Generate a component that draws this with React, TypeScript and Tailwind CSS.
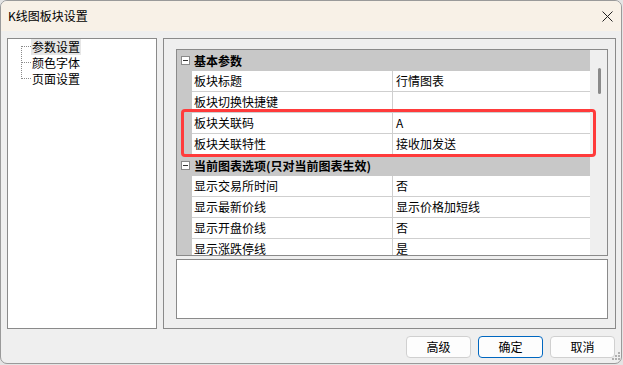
import React from 'react';

const FONT = '"Noto Sans CJK SC", "Microsoft YaHei", sans-serif';

interface PropRow {
  name: string;
  value: string;
}

interface PropGroup {
  title: string;
  rows: PropRow[];
}

const groups: PropGroup[] = [
  {
    title: '基本参数',
    rows: [
      { name: '板块标题', value: '行情图表' },
      { name: '板块切换快捷键', value: '' },
      { name: '板块关联码', value: 'A' },
      { name: '板块关联特性', value: '接收加发送' },
    ],
  },
  {
    title: '当前图表选项(只对当前图表生效)',
    rows: [
      { name: '显示交易所时间', value: '否' },
      { name: '显示最新价线', value: '显示价格加短线' },
      { name: '显示开盘价线', value: '否' },
      { name: '显示涨跌停线', value: '是' },
    ],
  },
];

const treeItems = ['参数设置', '颜色字体', '页面设置'];

const MinusBox = () => (
  <svg width="9" height="9" viewBox="0 0 9 9" shapeRendering="crispEdges">
    <rect x="0.5" y="0.5" width="8" height="8" fill="#fff" stroke="#8a8a8a" />
    <line x1="2" y1="4.5" x2="7" y2="4.5" stroke="#333" />
  </svg>
);

const TreeLines = () => (
  <svg width="10" height="36" viewBox="0 0 10 36" shapeRendering="crispEdges" className="shrink-0">
    <line x1="0.5" y1="1" x2="0.5" y2="35" stroke="#8a8a8a" strokeDasharray="1 1" />
    <line x1="1" y1="1.5" x2="10" y2="1.5" stroke="#8a8a8a" strokeDasharray="1 1" />
    <line x1="1" y1="17.5" x2="10" y2="17.5" stroke="#8a8a8a" strokeDasharray="1 1" />
    <line x1="1" y1="33.5" x2="10" y2="33.5" stroke="#8a8a8a" strokeDasharray="1 1" />
  </svg>
);

const DialogButton: React.FC<{ label: string; primary?: boolean }> = ({ label, primary }) => (
  <button
    className={
      primary
        ? 'w-[65px] h-[22px] rounded-[4px] border border-[#0067c0] bg-[#fdfdfd] text-[12px] text-black leading-none'
        : 'w-[65px] h-[22px] rounded-[4px] border border-[#d0d0d0] bg-[#fdfdfd] text-[12px] text-black leading-none'
    }
  >
    {label}
  </button>
);

export default function App() {
  return (
    <div
      className="relative w-[623px] h-[365px] bg-[#e4e4e4] overflow-hidden text-black"
      style={{ fontFamily: FONT }}
    >
      <div className="flex flex-col w-[622px] h-[364px] border border-[#9a9a9a] rounded-[7px] overflow-hidden bg-[#efefef]">
        {/* Title bar */}
        <div className="h-[30px] shrink-0 bg-[#f8f1e7] flex items-center justify-between pl-[7px] pr-[8px]">
          <span className="text-[12px] leading-none">K线图板块设置</span>
          <svg width="11" height="11" viewBox="0 0 11 11">
            <path d="M0.5 0.5 L10.5 10.5 M10.5 0.5 L0.5 10.5" stroke="#222" strokeWidth="1" />
          </svg>
        </div>

        {/* Body */}
        <div className="flex-1 flex flex-col pt-[7px] pl-[6px] pr-[5px]">
          <div className="flex gap-[6px] h-[291px]">
            {/* Left tree */}
            <div className="w-[150px] h-full border border-[#8a8a8a] bg-white flex pl-[13px] pt-[6px]">
              <TreeLines />
              <div className="flex flex-col -mt-[6px]">
                {treeItems.map((t, i) => (
                  <div
                    key={t}
                    className={
                      i === 0
                        ? 'h-[16px] px-[1px] bg-[#e6e6e6] text-[12px] leading-[16px] w-fit'
                        : 'h-[16px] px-[1px] text-[12px] leading-[16px] w-fit'
                    }
                  >
                    {t}
                  </div>
                ))}
              </div>
            </div>

            {/* Right group */}
            <div className="flex-1 h-full border border-[#8a8a8a] flex flex-col pt-[10px] pl-[12px] pr-[7px] pb-[9px] gap-[3px]">
              <div className="h-[207px] border border-[#8a8a8a] bg-white flex overflow-hidden">
                <div className="flex-1 flex flex-col overflow-hidden">
                  {groups.map((g) => (
                    <React.Fragment key={g.title}>
                      <div className="h-[21px] shrink-0 bg-[#c8c8c8] flex items-center">
                        <div className="w-[15px] flex justify-end pr-[2px]">
                          <MinusBox />
                        </div>
                        <span className="pl-[2px] text-[12px] font-bold leading-none">{g.title}</span>
                      </div>
                      {g.rows.map((r) => (
                        <div key={r.name} className="h-[21px] shrink-0 flex">
                          <div className="w-[15px] bg-[#c8c8c8]" />
                          <div className="w-[201px] border-r border-b border-[#cfcfcf] pl-[2px] text-[12px] leading-[20px]">
                            {r.name}
                          </div>
                          <div className="flex-1 border-b border-[#cfcfcf] pl-[3px] text-[12px] leading-[20px]">
                            {r.value}
                          </div>
                        </div>
                      ))}
                    </React.Fragment>
                  ))}
                </div>
                {/* Scrollbar */}
                <div className="w-[17px] bg-[#efefef] pt-[18px] pl-[8px]">
                  <div className="w-[3px] h-[26px] rounded-full bg-[#8a8a8a]" />
                </div>
              </div>
              <div className="h-[60px] border border-[#8a8a8a] bg-white" />
            </div>
          </div>

          {/* Buttons */}
          <div className="flex justify-end gap-[7px] mt-[7px] pr-[1px]">
            <DialogButton label="高级" />
            <DialogButton label="确定" primary />
            <DialogButton label="取消" />
          </div>
        </div>
      </div>

      {/* Size grip */}
      <svg className="absolute left-[612px] top-[352px]" width="9" height="9" viewBox="0 0 9 9" shapeRendering="crispEdges">
        <rect x="6" y="0" width="2" height="2" fill="#b0b0b0" />
        <rect x="3" y="3" width="2" height="2" fill="#b0b0b0" />
        <rect x="6" y="3" width="2" height="2" fill="#b0b0b0" />
        <rect x="0" y="6" width="2" height="2" fill="#b0b0b0" />
        <rect x="3" y="6" width="2" height="2" fill="#b0b0b0" />
        <rect x="6" y="6" width="2" height="2" fill="#b0b0b0" />
      </svg>

      {/* Red highlight annotation */}
      <div className="absolute left-[181px] top-[109px] w-[415px] h-[48px] border-[3px] border-[#ff3b3b] rounded-[4px] pointer-events-none" />
    </div>
  );
}
